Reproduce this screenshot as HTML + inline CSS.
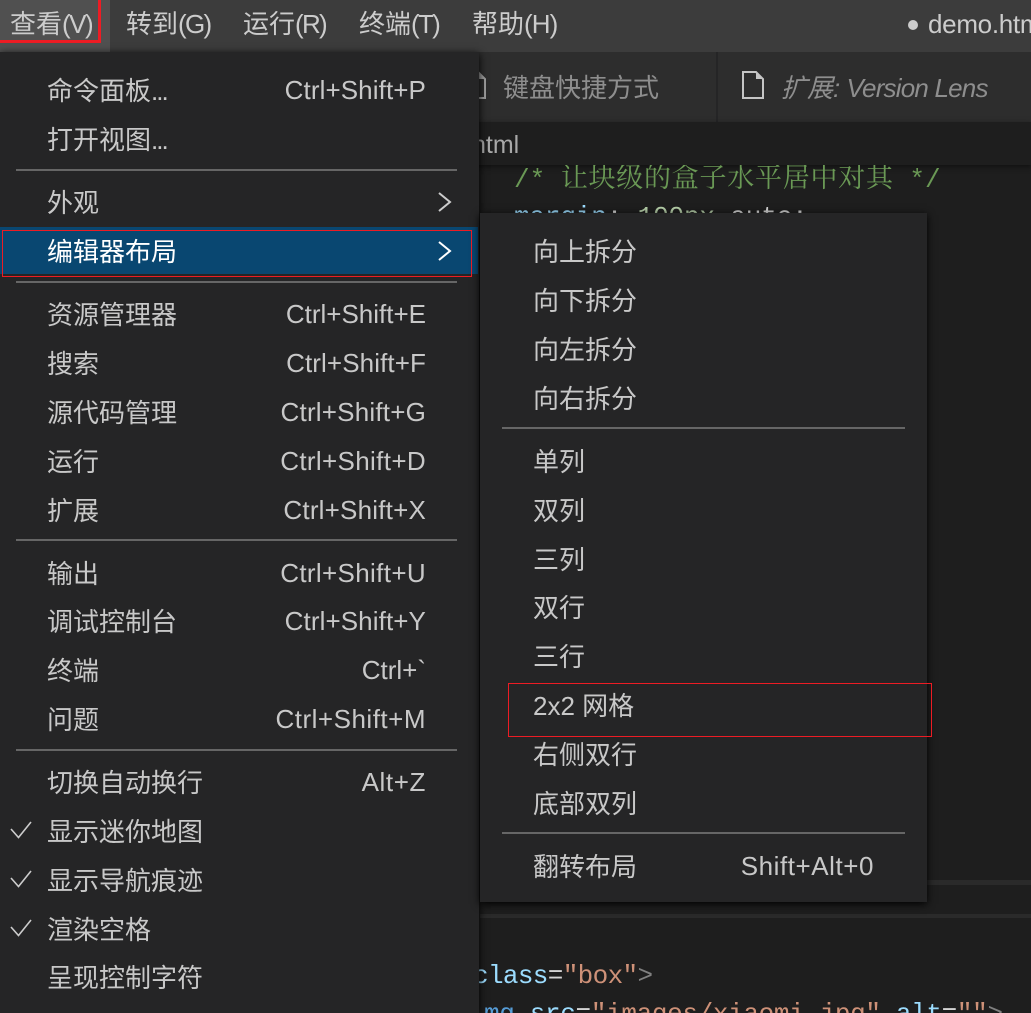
<!DOCTYPE html>
<html><head><meta charset="utf-8">
<style>
html,body{margin:0;padding:0;width:1031px;height:1013px;overflow:hidden;background:#1e1e1e}
body{position:relative;font-family:"Liberation Sans","Noto Sans CJK SC",sans-serif;font-size:26px;color:#c8c8c8}
.a{position:absolute}
.t{position:absolute;white-space:nowrap;line-height:36px;height:36px}
.c{margin-top:1px}
.d{letter-spacing:-2px}
.p{letter-spacing:-1.7px}
.k{position:absolute;white-space:nowrap;line-height:36px;height:36px;text-align:right}
.sep{position:absolute;height:2px;background:#666}
.code{position:absolute;white-space:pre;font-family:"Liberation Mono","Noto Sans CJK SC",monospace;font-size:26px;line-height:36px}
svg{position:absolute;overflow:visible}
</style></head>
<body>
<!-- title bar -->
<div class="a" style="left:0;top:0;width:1031px;height:52px;background:#3c3c3c"></div>
<div class="a" style="left:0;top:0;width:110px;height:52px;background:#505050"></div>
<div class="t" style="left:10px;top:6px;color:#ccc">查看<span style="letter-spacing:-1.5px">(V)</span></div>
<div class="t" style="left:126px;top:6px;color:#ccc">转到<span class="p">(G)</span></div>
<div class="t" style="left:243px;top:6px;color:#ccc">运行<span class="p">(R)</span></div>
<div class="t" style="left:359px;top:6px;color:#ccc">终端<span class="p">(T)</span></div>
<div class="t" style="left:472px;top:6px;color:#ccc">帮助<span style="letter-spacing:-.9px">(H)</span></div>
<div class="a" style="left:908px;top:20px;width:10px;height:10px;border-radius:50%;background:#ccc"></div>
<div class="t" style="left:928px;top:6px;color:#ccc;letter-spacing:-.3px">demo.html</div>
<div class="a" style="left:-4px;top:-4px;width:99px;height:41px;border:3px solid #ed1c24"></div>

<!-- tabs -->
<div class="a" style="left:0;top:52px;width:1031px;height:70px;background:#2d2d2d"></div>
<div class="a" style="left:716px;top:52px;width:2px;height:70px;background:#252526"></div>
<svg style="left:464px;top:71px" width="22" height="28" viewBox="0 0 22 28"><path d="M1 1H14L21 8V27H1Z" fill="none" stroke="#a0a0a0" stroke-width="2"/><path d="M14 1L21 8H14Z" fill="#a0a0a0"/></svg>
<div class="t" style="left:503px;top:70px;color:#8e8e8e">键盘快捷方式</div>
<svg style="left:742px;top:71px" width="22" height="28" viewBox="0 0 22 28"><path d="M1 1H14L21 8V27H1Z" fill="none" stroke="#c5c5c5" stroke-width="2"/><path d="M14 1L21 8H14Z" fill="#c5c5c5"/></svg>
<div class="t" style="left:781px;top:70px;color:#8e8e8e;font-style:italic">扩展: <span style="letter-spacing:-.8px;margin-left:-1px">Version Lens</span></div>

<!-- breadcrumb -->
<div class="a" style="left:0;top:122px;width:1031px;height:43px;background:#1e1e1e;box-shadow:0 2px 5px #111"></div>
<div class="t" style="left:472px;top:127px;color:#a8a8a8;font-size:25px">html</div>

<!-- editor -->
<div class="code" style="left:514px;top:158px;color:#6a9955;clip-path:inset(7px 0 0 0)">/* <span style="font-family:'Noto Serif CJK SC','Liberation Mono',serif;font-size:27px;letter-spacing:.75px">让块级的盒子水平居中对其</span> */</div>
<div class="code" style="left:514px;top:199px;letter-spacing:-.15px"><span style="color:#9cdcfe">margin</span><span style="color:#d4d4d4">: </span><span style="color:#b5cea8">100px</span><span style="color:#d4d4d4"> auto;</span></div>
<div class="a" style="left:480px;top:880px;width:551px;height:5px;background:#2a2a2a"></div>
<div class="a" style="left:480px;top:914px;width:551px;height:4px;background:#2a2a2a"></div>
<div class="code" style="left:473px;top:958px;letter-spacing:-.65px"><span style="color:#9cdcfe">class</span><span style="color:#d4d4d4">=</span><span style="color:#ce9178">"box"</span><span style="color:#808080">&gt;</span></div>
<div class="code" style="left:484px;top:996px;letter-spacing:-.35px"><span style="color:#569cd6">mg</span> <span style="color:#9cdcfe">src</span><span style="color:#d4d4d4">=</span><span style="color:#ce9178">"images/xiaomi.jpg"</span> <span style="color:#9cdcfe">alt</span><span style="color:#d4d4d4">=</span><span style="color:#ce9178">""</span><span style="color:#808080">&gt;</span></div>

<!-- main menu -->
<div class="a" style="left:0;top:52px;width:479px;height:961px;background:#252526;box-shadow:0 2px 8px #000"></div>
<div class="a" style="left:0;top:227px;width:478px;height:47px;background:#094771"></div>
<div class="sep" style="left:16px;top:169px;width:441px"></div>
<div class="sep" style="left:16px;top:281px;width:441px"></div>
<div class="sep" style="left:16px;top:539px;width:441px"></div>
<div class="sep" style="left:16px;top:749px;width:441px"></div>

<div class="t c" style="left:47px;top:72px">命令面板<span class="d">...</span></div><div class="k" style="right:605px;top:72px;letter-spacing:.1px">Ctrl+Shift+P</div>
<div class="t c" style="left:47px;top:121px">打开视图<span class="d">...</span></div>
<div class="t c" style="left:47px;top:184px">外观</div>
<svg style="left:437px;top:191px" width="14" height="22" viewBox="0 0 14 22"><path d="M2 2L13 11L2 20" fill="none" stroke="#ccc" stroke-width="2"/></svg>
<div class="t c" style="left:47px;top:233px;color:#fff">编辑器布局</div>
<svg style="left:437px;top:240px" width="14" height="22" viewBox="0 0 14 22"><path d="M2 2L13 11L2 20" fill="none" stroke="#fff" stroke-width="2"/></svg>
<div class="t c" style="left:47px;top:296px">资源管理器</div><div class="k" style="right:605px;top:296px">Ctrl+Shift+E</div>
<div class="t c" style="left:47px;top:345px">搜索</div><div class="k" style="right:605px;top:345px;letter-spacing:.1px">Ctrl+Shift+F</div>
<div class="t c" style="left:47px;top:394px">源代码管理</div><div class="k" style="right:605px;top:394px;letter-spacing:.2px">Ctrl+Shift+G</div>
<div class="t c" style="left:47px;top:443px">运行</div><div class="k" style="right:605px;top:443px;letter-spacing:.35px">Ctrl+Shift+D</div>
<div class="t c" style="left:47px;top:492px">扩展</div><div class="k" style="right:605px;top:492px;letter-spacing:.2px">Ctrl+Shift+X</div>
<div class="t c" style="left:47px;top:555px">输出</div><div class="k" style="right:605px;top:555px;letter-spacing:.35px">Ctrl+Shift+U</div>
<div class="t c" style="left:47px;top:603px">调试控制台</div><div class="k" style="right:605px;top:603px;letter-spacing:.1px">Ctrl+Shift+Y</div>
<div class="t c" style="left:47px;top:652px">终端</div><div class="k" style="right:605px;top:652px">Ctrl+`</div>
<div class="t c" style="left:47px;top:701px">问题</div><div class="k" style="right:605px;top:701px;letter-spacing:.5px">Ctrl+Shift+M</div>
<div class="t c" style="left:47px;top:764px">切换自动换行</div><div class="k" style="right:605px;top:764px;letter-spacing:.6px">Alt+Z</div>
<div class="t c" style="left:47px;top:813px">显示迷你地图</div>
<div class="t c" style="left:47px;top:862px">显示导航痕迹</div>
<div class="t c" style="left:47px;top:911px">渲染空格</div>
<div class="t c" style="left:47px;top:959px">呈现控制字符</div>
<svg style="left:10px;top:820px" width="22" height="20" viewBox="0 0 22 20"><path d="M1 9L8.5 17.5L21 2" fill="none" stroke="#ccc" stroke-width="1.6"/></svg>
<svg style="left:10px;top:869px" width="22" height="20" viewBox="0 0 22 20"><path d="M1 9L8.5 17.5L21 2" fill="none" stroke="#ccc" stroke-width="1.6"/></svg>
<svg style="left:10px;top:918px" width="22" height="20" viewBox="0 0 22 20"><path d="M1 9L8.5 17.5L21 2" fill="none" stroke="#ccc" stroke-width="1.6"/></svg>

<div class="a" style="left:2px;top:230px;width:468px;height:45px;border:1px solid #ed1c24"></div>

<!-- submenu -->
<div class="a" style="left:480px;top:213px;width:447px;height:689px;background:#252526;box-shadow:0 2px 8px #000"></div>
<div class="sep" style="left:502px;top:427px;width:403px"></div>
<div class="sep" style="left:502px;top:832px;width:403px"></div>
<div class="t c" style="left:533px;top:233px">向上拆分</div>
<div class="t c" style="left:533px;top:282px">向下拆分</div>
<div class="t c" style="left:533px;top:331px">向左拆分</div>
<div class="t c" style="left:533px;top:380px">向右拆分</div>
<div class="t c" style="left:533px;top:443px">单列</div>
<div class="t c" style="left:533px;top:492px">双列</div>
<div class="t c" style="left:533px;top:541px">三列</div>
<div class="t c" style="left:533px;top:589px">双行</div>
<div class="t c" style="left:533px;top:638px">三行</div>
<div class="t c" style="left:533px;top:687px">2x2 网格</div>
<div class="t c" style="left:533px;top:736px">右侧双行</div>
<div class="t c" style="left:533px;top:785px">底部双列</div>
<div class="t c" style="left:533px;top:848px">翻转布局</div>
<div class="k" style="right:157px;top:848px;letter-spacing:.55px">Shift+Alt+0</div>
<div class="a" style="left:508px;top:683px;width:422px;height:52px;border:1px solid #ed1c24"></div>
</body></html>
